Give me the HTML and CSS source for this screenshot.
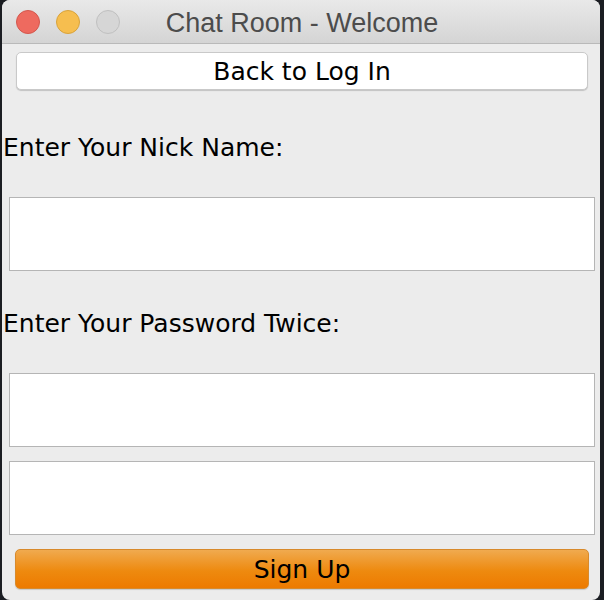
FILE: index.html
```html
<!DOCTYPE html>
<html>
<head>
<meta charset="utf-8">
<link rel="stylesheet" href="styles.css">
</head>
<body>
<div class="window">
  <div class="titlebar">
    <div class="lights">
      <span class="light red"></span>
      <span class="light yellow"></span>
      <span class="light grey"></span>
    </div>
    <div class="title">Chat Room - Welcome</div>
  </div>
  <div class="content">
    <button class="btn back">Back to Log In</button>
    <div class="label first">Enter Your Nick Name:</div>
    <input class="field nick" type="text">
    <div class="label second">Enter Your Password Twice:</div>
    <input class="field pw1" type="password">
    <input class="field pw2" type="password">
    <button class="btn signup">Sign Up</button>
  </div>
</div>
</body>
</html>
```
FILE: styles.css
```css
html, body {
  margin: 0;
  padding: 0;
  width: 604px;
  height: 600px;
  overflow: hidden;
  background: #1b1d22;
}
.window {
  margin-left: 2px;
  width: 598px;
  height: 600px;
  border-radius: 8px;
  overflow: hidden;
  background: #ececec;
  display: flex;
  flex-direction: column;
}
.titlebar {
  position: relative;
  height: 43px;
  flex: none;
  background: linear-gradient(#e9e9e9, #d4d4d4);
  border-bottom: 1px solid #b9b9b9;
  display: flex;
  align-items: center;
  justify-content: center;
}
.lights {
  position: absolute;
  left: 14px;
  top: 10px;
  display: flex;
  gap: 16px;
}
.light {
  width: 24px;
  height: 24px;
  border-radius: 50%;
  box-sizing: border-box;
}
.red { background: #ee6a5f; border: 1px solid #d4574d; }
.yellow { background: #f6be4f; border: 1px solid #d9a33b; }
.grey { background: #d6d6d6; border: 1px solid #c0c0c0; }
.title {
  font-family: "Liberation Sans", Arial, sans-serif;
  font-size: 27px;
  color: #4c4c4c;
  margin-left: 2px;
  margin-top: 4px;
}
.content {
  display: flex;
  flex-direction: column;
  font-family: "DejaVu Sans", sans-serif;
}
.btn {
  font-family: "DejaVu Sans", sans-serif;
  font-size: 25px;
  color: #000;
  border-radius: 5px;
  padding: 0;
  box-sizing: border-box;
}
.back {
  margin: 8px 12px 0 14px;
  height: 38px;
  background: #fff;
  border: 1px solid #c9c9c9;
  box-shadow: 0 1px 1px rgba(0,0,0,0.18);
}
.label {
  font-size: 25px;
  color: #000;
  margin-left: 1px;
  line-height: 30px;
  height: 30px;
}
.label.first { margin-top: 43px; }
.label.second { margin-top: 38px; }
.field {
  display: block;
  box-sizing: border-box;
  margin: 0 5px 0 7px;
  height: 74px;
  border: 1px solid #b5b5b5;
  background: #fff;
  outline: none;
  padding: 0;
}
.nick { margin-top: 34px; }
.pw1 { margin-top: 34px; }
.pw2 { margin-top: 14px; }
.signup {
  margin: 14px 11px 0 13px;
  height: 40px;
  border: 1px solid #d88a2c;
  background: linear-gradient(#f0aa4f, #ee8a0f 55%, #ed7a00);
  box-shadow: 0 1px 1px rgba(0,0,0,0.15);
}
```
